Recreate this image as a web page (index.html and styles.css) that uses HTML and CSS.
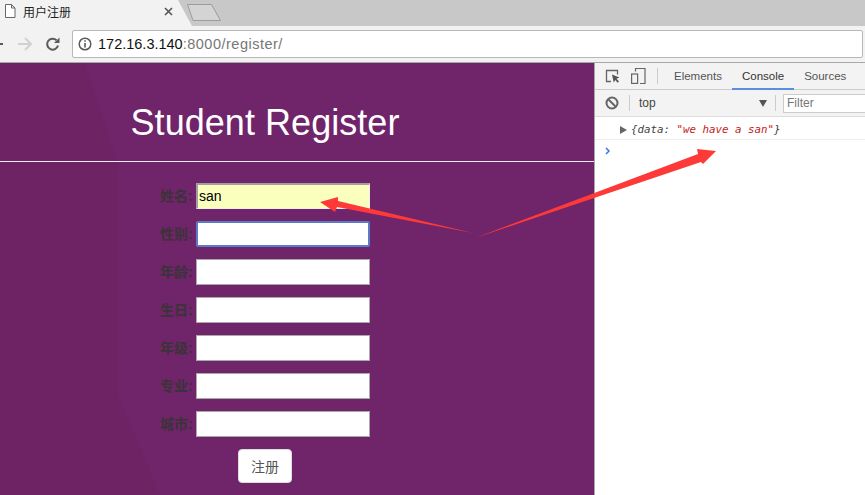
FILE: index.html
```html
<!DOCTYPE html>
<html lang="zh-CN">
<head>
  <meta charset="UTF-8">
  <title>用户注册</title>
  <link rel="stylesheet" href="styles.css">
</head>
<body>

  <div class="tabstrip">
    <div class="tab">
      <svg class="tab-icon" width="12" height="14" viewBox="0 0 12 14"><path d="M1.5 .5h6l3.500 3.500v9.500h-9.500z M7.500 .5v3.500h3.500" fill="#fff" stroke="#666"/></svg>
      <span class="tab-title">用户注册</span>
      <svg class="tab-close" width="9" height="9" viewBox="0 0 9 9"><path d="M1 1l7 7M8 1l-7 7" stroke="#555" stroke-width="1.600"/></svg>
    </div>
    <svg class="newtab" width="36" height="19" viewBox="0 0 36 19"><path d="M1.500 1.500h24l9 16h-27.500z" fill="#d4d4d4" stroke="#9c9c9c"/></svg>
  </div>

  <div class="toolbar">
    <svg class="nav-icon back" width="16" height="16" viewBox="0 0 16 16"><path d="M0 8h15" stroke="#5a5a5a" stroke-width="2"/></svg>
    <svg class="nav-icon" width="16" height="16" viewBox="0 0 16 16"><path d="M1 8h13M8 2l6 6-6 6" fill="none" stroke="#d0d0d0" stroke-width="2"/></svg>
    <svg class="nav-icon" width="16" height="16" viewBox="0 0 16 16"><path d="M13 9.500a5.500 5.500 0 1 1-1.500-5.300" fill="none" stroke="#5a5a5a" stroke-width="2"/><path d="M14.500 1.500v5.500h-5.500z" fill="#5a5a5a"/></svg>
    <div class="omnibox">
      <svg width="14" height="14" viewBox="0 0 14 14"><circle cx="7" cy="7" r="5.800" fill="none" stroke="#5a5a5a" stroke-width="1.500"/><path d="M7 6v4.500M7 3.300v1.500" stroke="#5a5a5a" stroke-width="1.600"/></svg>
      <span class="url"><b>172.16.3.140</b><span class="url-rest">:8000/register/</span></span>
    </div>
  </div>

  <div class="main">
    <div class="page">
      <svg class="page-shade" width="594" height="432" viewBox="0 0 594 432"><path d="M0 0H85L118 102V332L160 432H0z" fill="#6e2365"/></svg>
      <h1 class="page-title">Student Register</h1>
      <form class="reg-form">
        <div class="row"><label>姓名:</label><input class="filled" type="text" value="san"></div>
        <div class="row"><label>性别:</label><input class="focused" type="text"></div>
        <div class="row"><label>年龄:</label><input type="text"></div>
        <div class="row"><label>生日:</label><input type="text"></div>
        <div class="row"><label>年级:</label><input type="text"></div>
        <div class="row"><label>专业:</label><input type="text"></div>
        <div class="row"><label>城市:</label><input type="text"></div>
        <button type="button" class="submit">注册</button>
      </form>
    </div>

    <div class="devtools">
      <div class="dt-tabs">
        <svg class="dt-icon" width="16" height="15" viewBox="0 0 16 15"><path d="M6 12.500h-4.500v-11h11v4" fill="none" stroke="#666" stroke-width="1.300"/><path d="M7 5.500l7.500 3-3 1.200 2.500 2.800-1.300 1.200-2.500-2.800-1.500 2.600z" fill="#555"/></svg>
        <svg class="dt-icon" width="15" height="16" viewBox="0 0 15 16"><path d="M4.500 3.500v-3h9.500v15h-5" fill="none" stroke="#666" stroke-width="1.200"/><rect x=".6" y="6" width="6" height="9.400" fill="none" stroke="#666" stroke-width="1.200"/></svg>
        <div class="dt-sep"></div>
        <div class="dt-tab">Elements</div>
        <div class="dt-tab active">Console</div>
        <div class="dt-tab">Sources</div>
      </div>
      <div class="dt-filter">
        <svg width="14" height="14" viewBox="0 0 14 14"><circle cx="7" cy="7" r="5.500" fill="none" stroke="#666" stroke-width="2"/><path d="M3 3l8 8" stroke="#666" stroke-width="2"/></svg>
        <div class="dt-sep short"></div>
        <span class="dt-context">top</span>
        <span class="dt-caret"></span>
        <div class="dt-sep short"></div>
        <div class="dt-search">Filter</div>
      </div>
      <div class="dt-log"><span class="dt-arrow"></span><i>{data: <span class="dt-str">"we have a san"</span>}</i></div>
      <div class="dt-prompt">
        <svg width="6" height="8" viewBox="0 0 6 8"><path d="M1 1l3 3-3 3" fill="none" stroke="#3b78e7" stroke-width="1.500"/></svg>
      </div>
    </div>
  </div>

  <svg class="arrows" width="865" height="495" viewBox="0 0 865 495">
    <path d="M473 233L338 201 338 197 320 202 335 212 337 207z" fill="#fd3a38"/>
    <path d="M475 238L698 154 697 149 716 151 703 164 701 162z" fill="#fd3a38"/>
  </svg>

</body>
</html>
```
FILE: styles.css
```css
body {
  margin: 0;
  width: 865px;
  height: 495px;
  overflow: hidden;
  position: relative;
  font-family: 'Liberation Sans', 'Noto Sans CJK SC', sans-serif;
  background: #fff;
}

.tabstrip {
  height: 26px;
  background: #c8c8c8;
  display: flex;
}

.tab {
  width: 192px;
  height: 26px;
  background: #f2f2f2;
  clip-path: polygon(0 0, 178px 0, 192px 26px, 0 26px);
  display: flex;
  align-items: center;
  box-sizing: border-box;
  padding: 0 0 4px 4px;
}

.tab-title {
  margin-left: 7px;
  font-size: 12px;
  color: #222;
  width: 141px;
}

.newtab {
  margin: 3px 0 0 -6px;
}

.toolbar {
  height: 36px;
  background: #f2f2f2;
  border-bottom: 1px solid #a8a8a8;
  display: flex;
  align-items: center;
}

.nav-icon {
  margin-left: 13px;
  flex: none;
}

.nav-icon:nth-child(3) {
  margin-left: 12px;
}

.nav-icon.back {
  margin-left: -12px;
}

.omnibox {
  margin-left: 11px;
  width: 791px;
  height: 28px;
  box-sizing: border-box;
  background: #fff;
  border: 1px solid #b8b8b8;
  border-radius: 2px;
  display: flex;
  align-items: center;
  padding-left: 5px;
}

.url {
  margin-left: 6px;
  font-size: 14.500px;
  color: #777;
}

.url b {
  font-weight: normal;
  color: #111;
}

.url-rest {
  letter-spacing: .5px;
}

.main {
  display: flex;
  height: 432px;
}

.page {
  width: 594px;
  flex: none;
  background: #70246a;
  position: relative;
}

.page-shade {
  position: absolute;
  left: 0;
  top: 0;
}

.page-title {
  position: relative;
  margin: 0;
  height: 99px;
  box-sizing: border-box;
  padding: 39px 64px 0 0;
  border-bottom: 1px solid #eee;
  text-align: center;
  font-size: 36px;
  letter-spacing: .05px;
  line-height: 41px;
  font-weight: normal;
  color: #fff;
}

.reg-form {
  position: relative;
  width: 530px;
  padding-top: 21px;
  display: flex;
  flex-direction: column;
  gap: 12px;
}

.row {
  display: flex;
  align-items: center;
  height: 26px;
  padding-left: 160px;
}

.row label {
  width: 36px;
  margin-top: -2px;
  font-size: 14px;
  font-weight: bold;
  color: #3a3338;
}

.row input {
  width: 174px;
  height: 26px;
  box-sizing: border-box;
  margin: 0;
  padding: 0 1px 2px;
  border: 1px solid #a9a9a9;
  background: #fff;
  font-family: inherit;
  font-size: 14px;
  color: #000;
  outline: none;
}

.row input.filled {
  background: #faffbd;
  border-width: 2px 1px 1px 2px;
  border-color: #a0a0a0 #eee #eee #a0a0a0;
}

.row input.focused {
  border: 2px solid #5b7bc9;
  border-radius: 2px;
}

.submit {
  align-self: center;
  width: 54px;
  height: 34px;
  padding: 0;
  background: #fff;
  border: 1px solid #ddd;
  border-radius: 4px;
  font-family: inherit;
  font-size: 14px;
  color: #555;
}

.devtools {
  flex: 1;
  background: #fff;
  border-left: 1px solid #a8a8a8;
  font-size: 12px;
  color: #444;
}

.dt-tabs {
  height: 27px;
  box-sizing: border-box;
  background: #f3f3f3;
  border-bottom: 1px solid #ccc;
  display: flex;
  align-items: center;
  padding-left: 10px;
}

.dt-icon {
  margin-right: 10px;
}

.dt-sep {
  width: 1px;
  height: 16px;
  background: #ccc;
  margin: 0 6px 0 1px;
}

.dt-tab {
  padding: 0 10px;
  height: 27px;
  line-height: 27px;
  box-sizing: border-box;
  font-size: 11.500px;
  color: #555;
}

.dt-tab.active {
  color: #333;
  border-bottom: 2px solid #5a8fe0;
}

.dt-filter {
  height: 27px;
  box-sizing: border-box;
  background: #f3f3f3;
  border-bottom: 1px solid #ddd;
  display: flex;
  align-items: center;
  padding-left: 10px;
}

.dt-filter .short {
  margin: 0 0 0 10px;
}

.dt-context {
  margin-left: 9px;
  width: 120px;
  color: #444;
}

.dt-caret {
  width: 0;
  height: 0;
  margin-right: -2px;
  border-left: 4.500px solid transparent;
  border-right: 4.500px solid transparent;
  border-top: 7px solid #555;
}

.dt-search {
  margin-left: 7px;
  flex: 1;
  height: 19px;
  line-height: 17px;
  box-sizing: border-box;
  border: 1px solid #ccc;
  border-right: none;
  background: #fff;
  padding-left: 3px;
  color: #777;
}

.dt-log {
  height: 19px;
  border-bottom: 1px solid #eee;
  padding: 3px 0 0 25px;
  display: flex;
  align-items: center;
  font-family: 'DejaVu Sans Mono', monospace;
  font-size: 10.800px;
  color: #444;
}

.dt-arrow {
  width: 0;
  height: 0;
  border-top: 4px solid transparent;
  border-bottom: 4px solid transparent;
  border-left: 7px solid #666;
  margin-right: 4px;
}

.dt-str {
  color: #c41a16;
}

.dt-prompt {
  padding: 4px 0 0 10px;
}

.arrows {
  position: absolute;
  left: 0;
  top: 0;
}
```
